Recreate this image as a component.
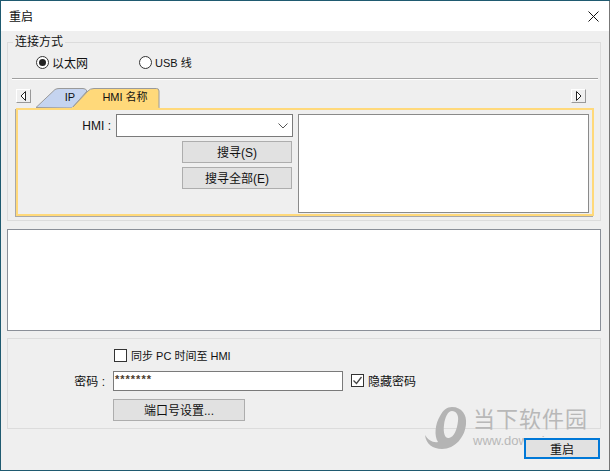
<script>
  let ports = ['IP', 'HMI 名称'];
</script>

<div class="window">
  <div class="titlebar">
    <span class="title">重启</span>
    <svg class="close" width="11" height="11" viewBox="0 0 11 11"><path d="M0.5 0.5L10.5 10.5M10.5 0.5L0.5 10.5" stroke="#111" fill="none"/></svg>
  </div>

  <div class="body">
    <fieldset class="group conn">
      <legend>连接方式</legend>
      <div class="radios">
        <label class="radio"><span class="dot on"></span>以太网</label>
        <label class="radio usb"><span class="dot"></span>USB 线</label>
      </div>
      <div class="sep"></div>
      <div class="tabstrip">
        <div class="arrow left"><svg width="7" height="10" viewBox="0 0 7 10"><path d="M5.5 0.5L1 5L5.5 9.5Z" fill="#fff" stroke="#222"/></svg></div>
        <svg class="tabs" width="128" height="22" viewBox="0 0 128 22">
          <path d="M2 21.500L21 3.500Q23 2.500 25 2.500H49Q52 2.500 53 5L38 22Z" fill="#c5d4f0" stroke="#9a9a9a"/>
          <path d="M38 22L54 5Q56 2.500 60 2.500H122.500Q125 2.500 125 5V22Z" fill="#ffd97a" stroke="#9a9a9a"/>
          <path d="M38 21.500H124.500" stroke="#ffd97a" fill="none"/>
          <text x="36" y="15" class="tabtext" text-anchor="middle">{ports[0]}</text>
          <text x="91" y="15" class="tabtext" text-anchor="middle">{ports[1]}</text>
        </svg>
        <div class="arrow right"><svg width="7" height="10" viewBox="0 0 7 10"><path d="M1.500 0.500L6 5L1.500 9.500Z" fill="#fff" stroke="#222"/></svg></div>
      </div>
      <div class="panel">
        <div class="panel-left">
          <div class="hmi-row">
            <span class="hmi-label">HMI :</span>
            <div class="combo">
              <svg width="10" height="6" viewBox="0 0 10 6"><path d="M0.500 0.500L5 5L9.500 0.500" stroke="#555" fill="none"/></svg>
            </div>
          </div>
          <button class="btn search">搜寻(S)</button>
          <button class="btn search">搜寻全部(E)</button>
        </div>
        <div class="listbox"></div>
      </div>
    </fieldset>

    <div class="output"></div>

    <div class="group bottom">
      <label class="check sync"><span class="box"></span>同步 PC 时间至 HMI</label>
      <div class="pw-row">
        <span class="pw-label">密码 :</span>
        <div class="pw-input">*******</div>
        <label class="check"><span class="box">
          <svg width="13" height="13" viewBox="0 0 13 13"><path d="M2.500 6.500L5.500 9.500L10.500 3" stroke="#444" stroke-width="1.300" fill="none"/></svg>
        </span>隐藏密码</label>
      </div>
      <button class="btn port">端口号设置...</button>
    </div>

    <div class="footer">
      <button class="btn restart">重启</button>
    </div>
  </div>

  <div class="watermark">
    <svg width="42" height="43" viewBox="0 0 42 43">
      <path d="M27 1C37 1 42 9 41 18C40 31 30 43 17 43C8 43 1 38 0 29C3 34 8 37 13 36C9 30 10 18 15 10C18 4 22 1 27 1ZM27 5C23 5 20 11 19 19C18 27 20 33 24 32C29 31 32 24 33 15C34 9 31 5 27 5Z" fill="#b4b4b4" fill-rule="evenodd"/>
    </svg>
    <div class="wm-text">
      <div class="wm-cn">当下软件园</div>
      <div class="wm-url">www.downxia.com</div>
    </div>
  </div>
</div>

<style>
  :global(body) {
    background: #1f5a70;
  }

  .window {
    position: relative;
    width: 608px;
    height: 469px;
    margin: 1px 0 0 1px;
    background: #efefef;
    border-right: 1px solid #777;
    box-sizing: content-box;
    font-family: "Liberation Sans", "Noto Sans CJK SC", sans-serif;
    font-size: 12px;
    color: #111;
    overflow: hidden;
  }

  .titlebar {
    height: 30px;
    background: #fff;
    display: flex;
    align-items: center;
    justify-content: space-between;
    padding: 0 10px 0 8px;
  }

  .title {
    font-size: 12px;
    padding-bottom: 2px;
  }

  .body {
    padding: 5px 8px 0 6px;
  }

  .group {
    border: 1px solid #dcdcdc;
    margin: 0;
    box-sizing: border-box;
  }

  .conn {
    height: 186px;
    padding: 0 2px 0 4px;
    margin-top: -1px;
  }

  legend {
    padding: 0 2px;
    margin-left: 1px;
    font-size: 12px;
    line-height: 14px;
  }

  .radios {
    display: flex;
    height: 24px;
    align-items: center;
    padding-left: 24px;
    margin: 1px 0 4px;
  }

  .radio {
    display: flex;
    align-items: center;
    gap: 3px;
    width: 103px;
  }

  .usb {
    font-size: 11px;
  }

  .dot {
    width: 11px;
    height: 11px;
    border: 1px solid #333;
    border-radius: 50%;
    background: #fff;
    position: relative;
  }

  .dot.on::after {
    content: "";
    position: absolute;
    left: 2px;
    top: 2px;
    width: 7px;
    height: 7px;
    border-radius: 50%;
    background: #222;
  }

  .sep {
    border-top: 1px solid #a0a0a0;
    border-bottom: 1px solid #fff;
  }

  .tabstrip {
    display: flex;
    align-items: flex-end;
    height: 28px;
    padding-left: 4px;
  }

  .arrow {
    width: 15px;
    height: 14px;
    box-sizing: border-box;
    display: flex;
    align-items: center;
    justify-content: center;
    border-right: 1px solid #999;
    border-bottom: 1px solid #999;
    border-top: 1px solid #fff;
    border-left: 1px solid #fff;
    margin-bottom: 5px;
  }

  .tabs {
    margin-left: 3px;
    display: block;
  }

  .tabtext {
    font-family: "Liberation Sans", "Noto Sans CJK SC", sans-serif;
    font-size: 11px;
    fill: #111;
  }

  .arrow.right {
    margin-left: auto;
    margin-right: 12px;
  }

  .panel {
    display: flex;
    height: 108px;
    box-sizing: border-box;
    margin: 0 4px 0 4px;
    border: 2px solid #ffd97a;
    box-shadow: -1px 1px 0 #a8a8a8;
    padding: 4px 3px 1px 0;
  }

  .panel-left {
    width: 277px;
    display: flex;
    flex-direction: column;
    align-items: flex-end;
    gap: 4px;
    flex: none;
    padding-right: 2px;
    box-sizing: border-box;
  }

  .hmi-row {
    display: flex;
    align-items: center;
    gap: 5px;
  }

  .hmi-label {
    font-size: 12px;
  }

  .combo {
    width: 177px;
    height: 23px;
    box-sizing: border-box;
    background: #fff;
    border: 1px solid #7a7a7a;
    display: flex;
    align-items: center;
    justify-content: flex-end;
    padding-right: 4px;
  }

  .btn {
    background: #e1e1e1;
    border: 1px solid #adadad;
    font: inherit;
    color: #111;
    padding: 0;
    display: block;
  }

  .search {
    width: 110px;
    height: 22px;
    margin-right: 1px;
    padding-bottom: 2px;
  }

  .listbox {
    flex: 1;
    margin-left: 3px;
    background: #fff;
    border: 1px solid #8a8a8a;
  }

  .output {
    height: 102px;
    box-sizing: border-box;
    margin: 8px 0 0;
    background: #fff;
    border: 1px solid #8a8f98;
  }

  .bottom {
    margin-top: 7px;
    height: 91px;
    padding-top: 8px;
    position: relative;
  }

  .check {
    display: inline-flex;
    align-items: center;
    gap: 4px;
  }

  .sync {
    margin-left: 106px;
    height: 16px;
    font-size: 11px;
  }

  .box {
    width: 11px;
    height: 11px;
    border: 1px solid #333;
    background: #fff;
    display: flex;
  }

  .box svg {
    margin: -1px;
  }

  .pw-row {
    display: flex;
    align-items: center;
    height: 20px;
    margin-top: 6px;
  }

  .pw-label {
    width: 105px;
    text-align: right;
    padding-right: 8px;
    box-sizing: border-box;
  }

  .pw-input {
    width: 230px;
    height: 20px;
    box-sizing: border-box;
    background: #fff;
    border: 1px solid #7a7a7a;
    padding-left: 1px;
    font-size: 11px;
    font-weight: bold;
    letter-spacing: 1px;
    line-height: 14px;
    color: #4a3a2a;
    margin-right: 8px;
  }

  .port {
    width: 132px;
    height: 22px;
    margin: 8px 0 0 105px;
  }

  .footer {
    display: flex;
    justify-content: flex-end;
    padding: 9px 0 0;
  }

  .restart {
    width: 76px;
    height: 21px;
    border: 2px solid #0078d7;
    margin-right: 1px;
    position: relative;
    z-index: 1;
  }

  .watermark {
    position: absolute;
    left: 424px;
    top: 405px;
    display: flex;
    gap: 6px;
    pointer-events: none;
  }

  .wm-text {
    margin-top: 1px;
  }

  .wm-cn {
    font-size: 22px;
    line-height: 26px;
    letter-spacing: 1px;
    color: #b8b8b8;
  }

  .wm-url {
    font-size: 13px;
    line-height: 16px;
    color: #b8b8b8;
  }
</style>
